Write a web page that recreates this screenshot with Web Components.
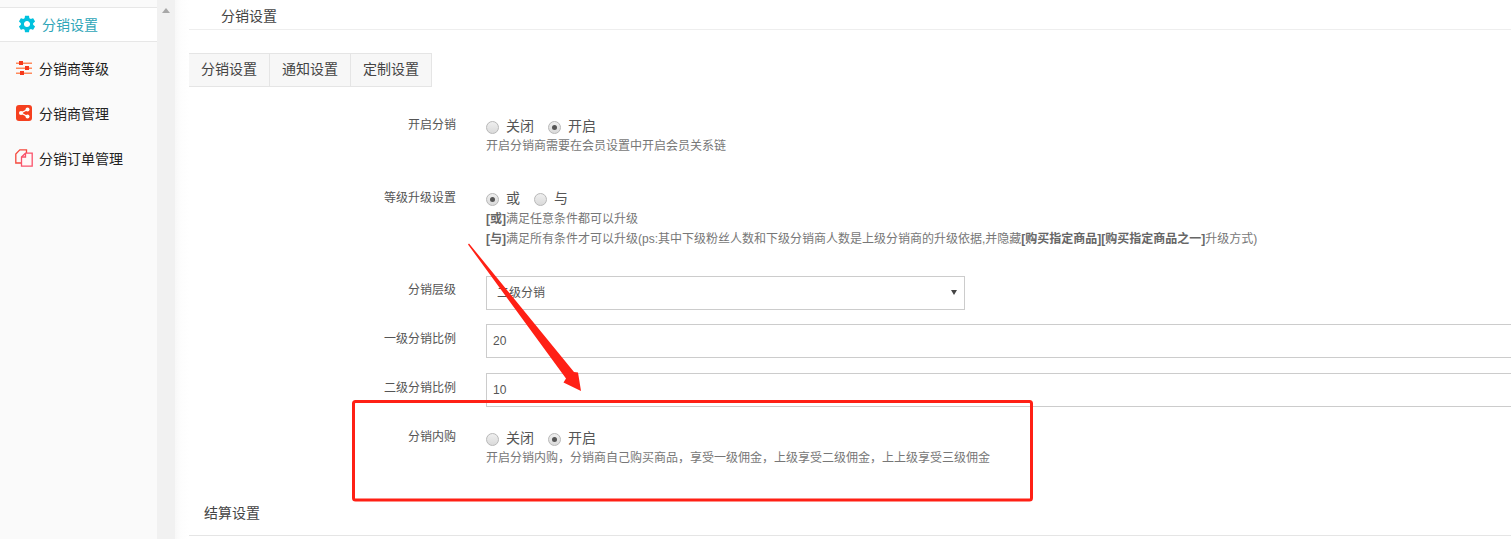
<!DOCTYPE html>
<html lang="zh-CN">
<head>
<meta charset="utf-8">
<title>分销设置</title>
<style>
    html, body { margin: 0; padding: 0; height: 100%; overflow: hidden; background: #fff; }
    body { font-family: "Liberation Sans", "Noto Sans CJK SC", sans-serif; font-size: 12px; color: #555; }
</style>
</head>
<body>
<app-shell>
    <side-nav slot="nav">
        <nav-item active label="分销设置" icon="gear"></nav-item>
        <nav-item label="分销商等级" icon="sliders"></nav-item>
        <nav-item label="分销商管理" icon="share"></nav-item>
        <nav-item label="分销订单管理" icon="pages"></nav-item>
    </side-nav>

    <page-header>分销设置</page-header>
    <tab-bar>
        <tab-item>分销设置</tab-item>
        <tab-item>通知设置</tab-item>
        <tab-item>定制设置</tab-item>
    </tab-bar>

    <form-row label="开启分销" style="--row-top:29px;--label-top:1px">
        <radio-group>
            <radio-option>关闭</radio-option>
            <radio-option checked>开启</radio-option>
        </radio-group>
        <help-text>开启分销商需要在会员设置中开启会员关系链</help-text>
    </form-row>

    <form-row label="等级升级设置" style="--row-top:32px;--label-top:2px">
        <radio-group style="height:21px">
            <radio-option checked>或</radio-option>
            <radio-option>与</radio-option>
        </radio-group>
        <help-text><b>[或]</b>满足任意条件都可以升级</help-text>
        <help-text><b>[与]</b>满足所有条件才可以升级(ps:其中下级粉丝人数和下级分销商人数是上级分销商的升级依据,并隐藏<b>[购买指定商品][购买指定商品之一]</b>升级方式)</help-text>
    </form-row>

    <form-row label="分销层级" style="--row-top:27px;--label-top:6px">
        <select-box>二级分销</select-box>
    </form-row>
    <form-row label="一级分销比例" style="--row-top:14px;--label-top:7px">
        <text-field>20</text-field>
    </form-row>
    <form-row label="二级分销比例" style="--row-top:15px;--label-top:7px">
        <text-field>10</text-field>
    </form-row>

    <form-row label="分销内购" style="--row-top:21px;--label-top:1px">
        <radio-group>
            <radio-option>关闭</radio-option>
            <radio-option checked>开启</radio-option>
        </radio-group>
        <help-text>开启分销内购，分销商自己购买商品，享受一级佣金，上级享受二级佣金，上上级享受三级佣金</help-text>
    </form-row>

    <section-title>结算设置</section-title>
</app-shell>

<script>
/**
 * Page frame: sidebar, scrollbar rail, content column and the red annotation on top
 */
class AppShell extends HTMLElement {
    constructor() {
        super();
        this.attachShadow({ mode: 'open' });
    }

    connectedCallback() {
        this.shadowRoot.innerHTML = `
            <style>
                :host {
                    display: grid;
                    grid-template-columns: 157px 18px 14px minmax(0, 1fr);
                    height: 539px;
                    overflow: hidden;
                    position: relative;
                }
                .rail {
                    background: #f1f1f1;
                    display: flex;
                    justify-content: center;
                    padding-top: 8px;
                    box-sizing: border-box;
                }
                .rail i {
                    width: 0;
                    height: 0;
                    border: 4px solid transparent;
                    border-top: 0;
                    border-bottom: 5px solid #a8a8a8;
                }
                .gutter { background: linear-gradient(90deg, #f8f8f8, #fdfdfd 40%, #fff); }
                .content { min-width: 0; }
                svg.mark { position: absolute; left: 0; top: 0; pointer-events: none; }
            </style>
            <slot name="nav"></slot>
            <div class="rail"><i></i></div>
            <div class="gutter"></div>
            <div class="content"><slot></slot></div>
            <svg class="mark" width="1511" height="539" viewBox="0 0 1511 539" aria-hidden="true">
                <rect x="353.5" y="401.5" width="678" height="98.5" rx="2" fill="none" stroke="#ff2015" stroke-width="3"/>
                <polygon fill="#ff2015" points="468,244.5 469,243.5 574,372 578,372.5 581,391 563.5,382.5 566,378.5"/>
            </svg>
        `;
    }
}

/**
 * Left column holding the navigation items
 */
class SideNav extends HTMLElement {
    constructor() {
        super();
        this.attachShadow({ mode: 'open' });
    }

    connectedCallback() {
        this.shadowRoot.innerHTML = `
            <style>
                :host {
                    display: block;
                    background: #fafafa;
                    padding-top: 7px;
                    box-sizing: border-box;
                }
            </style>
            <slot></slot>
        `;
    }
}

// Inline icons of the sidebar
const NAV_ICONS = {
    gear: `<svg width="18" height="18" viewBox="1.5 1.5 21 21"><path fill="#00c1de" d="M19.14 12.94c.04-.3.06-.61.06-.94 0-.32-.02-.64-.07-.94l2.03-1.58c.18-.14.23-.41.12-.61l-1.92-3.32c-.12-.22-.37-.29-.59-.22l-2.39.96c-.5-.38-1.03-.7-1.62-.94l-.36-2.54c-.04-.24-.24-.41-.48-.41h-3.84c-.24 0-.43.17-.47.41l-.36 2.54c-.59.24-1.13.57-1.62.94l-2.39-.96c-.22-.08-.47 0-.59.22L2.74 8.87c-.12.21-.08.47.12.61l2.03 1.58c-.05.3-.09.63-.09.94s.02.64.07.94l-2.03 1.58c-.18.14-.23.41-.12.61l1.92 3.32c.12.22.37.29.59.22l2.39-.96c.5.38 1.03.7 1.62.94l.36 2.54c.05.24.24.41.48.41h3.84c.24 0 .44-.17.47-.41l.36-2.54c.59-.24 1.13-.56 1.62-.94l2.39.96c.22.08.47 0 .59-.22l1.92-3.32c.12-.22.07-.47-.12-.61l-2.01-1.58zM12 15.6c-1.98 0-3.6-1.62-3.6-3.6s1.62-3.6 3.6-3.6 3.6 1.62 3.6 3.6-1.62 3.6-3.6 3.6z"/></svg>`,
    sliders: `<svg width="18" height="18" viewBox="0 0 18 18">
        <g fill="#ff8a5c"><rect x="1" y="3.5" width="16" height="1.5"/><rect x="1" y="8.5" width="16" height="1.5"/><rect x="1" y="13.5" width="16" height="1.5"/></g>
        <g fill="#f5391c"><rect x="4" y="2" width="4" height="4"/><rect x="10" y="7" width="4" height="4"/><rect x="5" y="12" width="4" height="4"/></g>
    </svg>`,
    share: `<svg width="18" height="18" viewBox="0 0 18 18">
        <rect x="1" y="1" width="16" height="16" rx="3" fill="#f5401f"/>
        <path d="M12.5 5.5 L6 9 L12.5 12.5" fill="none" stroke="#fff" stroke-width="1.4"/>
        <circle cx="12.5" cy="5.5" r="2" fill="#fff"/><circle cx="6" cy="9" r="2" fill="#fff"/><circle cx="12.5" cy="12.5" r="2" fill="#fff"/>
    </svg>`,
    pages: `<svg width="18" height="18" viewBox="0 0 18 18" fill="none" stroke="#f9526a" stroke-width="1.3">
        <path d="M6.5 14H.8V5L4.8.8H11.5V4" stroke="#f5483c"/>
        <path d="M6.5 8 10.5 4.2H17.2V17.2H6.5Z" fill="#fff8f8"/>
        <path d="M10.5 4.2V8H6.5" />
    </svg>`
};

/**
 * One sidebar entry, active one is white with borders
 */
class NavItem extends HTMLElement {
    constructor() {
        super();
        this.attachShadow({ mode: 'open' });
    }

    connectedCallback() {
        const icon = NAV_ICONS[this.getAttribute('icon')] || '';
        this.shadowRoot.innerHTML = `
            <style>
                :host {
                    display: flex;
                    align-items: center;
                    height: 45px;
                    padding-left: 15px;
                    gap: 6px;
                    box-sizing: border-box;
                    font-size: 14px;
                    color: #222;
                }
                :host([active]) {
                    height: 35px;
                    padding: 0 0 2px 18px;
                    margin-bottom: 3px;
                    background: #fff;
                    border-top: 1px solid #e7e7e7;
                    border-bottom: 1px solid #e7e7e7;
                    color: #2ea5b8;
                }
                svg { display: block; }
                .ico { flex: none; width: 18px; height: 18px; }
            </style>
            <span class="ico">${icon}</span>
            <span>${this.getAttribute('label') || ''}</span>
        `;
    }
}

/**
 * Title at the top of the content column
 */
class PageHeader extends HTMLElement {
    constructor() {
        super();
        this.attachShadow({ mode: 'open' });
    }

    connectedCallback() {
        this.shadowRoot.innerHTML = `
            <style>
                :host {
                    display: block;
                    height: 30px;
                    line-height: 32px;
                    padding-left: 32px;
                    box-sizing: border-box;
                    border-bottom: 1px solid #eee;
                    font-size: 14px;
                    color: #444;
                }
            </style>
            <slot></slot>
        `;
    }
}

/**
 * Row of tabs
 */
class TabBar extends HTMLElement {
    constructor() {
        super();
        this.attachShadow({ mode: 'open' });
    }

    connectedCallback() {
        this.shadowRoot.innerHTML = `
            <style>
                :host { display: flex; margin-top: 23px; }
            </style>
            <slot></slot>
        `;
    }
}

class TabItem extends HTMLElement {
    constructor() {
        super();
        this.attachShadow({ mode: 'open' });
    }

    connectedCallback() {
        this.shadowRoot.innerHTML = `
            <style>
                :host {
                    display: block;
                    height: 34px;
                    line-height: 30px;
                    padding: 0 12px;
                    box-sizing: border-box;
                    background: #f7f7f7;
                    border-top: 1px solid #e5e5e5;
                    border-bottom: 1px solid #e5e5e5;
                    border-right: 1px solid #e5e5e5;
                    font-size: 14px;
                    color: #444;
                }
            </style>
            <slot></slot>
        `;
    }
}

/**
 * Form line: label on the right of a fixed column, controls next to it
 */
class FormRow extends HTMLElement {
    constructor() {
        super();
        this.attachShadow({ mode: 'open' });
    }

    connectedCallback() {
        this.shadowRoot.innerHTML = `
            <style>
                :host {
                    display: grid;
                    grid-template-columns: 267px minmax(0, 1fr);
                    column-gap: 30px;
                    margin-top: var(--row-top, 0);
                }
                .label {
                    text-align: right;
                    font-size: 12px;
                    line-height: 16px;
                    padding-top: var(--label-top, 0);
                    color: #555;
                }
                .controls { min-width: 0; }
            </style>
            <div class="label">${this.getAttribute('label') || ''}</div>
            <div class="controls"><slot></slot></div>
        `;
    }
}

class RadioGroup extends HTMLElement {
    constructor() {
        super();
        this.attachShadow({ mode: 'open' });
    }

    connectedCallback() {
        this.shadowRoot.innerHTML = `
            <style>
                :host { display: flex; align-items: flex-start; height: 20px; gap: 14px; }
            </style>
            <slot></slot>
        `;
    }
}

/**
 * Grey radio button with text, drawn with CSS to keep the old browser look
 */
class RadioOption extends HTMLElement {
    constructor() {
        super();
        this.attachShadow({ mode: 'open' });
    }

    connectedCallback() {
        this.shadowRoot.innerHTML = `
            <style>
                :host {
                    display: inline-flex;
                    align-items: flex-start;
                    gap: 7px;
                    font-size: 14px;
                    line-height: 20px;
                    color: #555;
                }
                .dot {
                    width: 13px;
                    height: 13px;
                    margin-top: 5px;
                    border-radius: 50%;
                    box-sizing: border-box;
                    border: 1px solid #b8b8b8;
                    background: linear-gradient(#efefef, #dadada);
                    display: flex;
                    align-items: center;
                    justify-content: center;
                }
                :host([checked]) .dot::after {
                    content: '';
                    width: 5px;
                    height: 5px;
                    border-radius: 50%;
                    background: #555;
                }
            </style>
            <span class="dot"></span>
            <span><slot></slot></span>
        `;
    }
}

class HelpText extends HTMLElement {
    constructor() {
        super();
        this.attachShadow({ mode: 'open' });
    }

    connectedCallback() {
        this.shadowRoot.innerHTML = `
            <style>
                :host {
                    display: block;
                    line-height: 20px;
                    font-size: 12px;
                    color: #777;
                    white-space: nowrap;
                }
                ::slotted(b) { color: #666; font-weight: 700; }
            </style>
            <slot></slot>
        `;
    }
}

class SelectBox extends HTMLElement {
    constructor() {
        super();
        this.attachShadow({ mode: 'open' });
    }

    connectedCallback() {
        this.shadowRoot.innerHTML = `
            <style>
                :host {
                    display: flex;
                    align-items: center;
                    justify-content: space-between;
                    width: 479px;
                    height: 34px;
                    padding: 0 7px 0 10px;
                    box-sizing: border-box;
                    border: 1px solid #ccc;
                    font-size: 12px;
                    color: #555;
                    background: #fff;
                }
                span { margin-bottom: 3px; }
                i {
                    width: 0;
                    height: 0;
                    margin-bottom: 1px;
                    border: 3px solid transparent;
                    border-bottom: 0;
                    border-top: 5px solid #444;
                }
            </style>
            <span><slot></slot></span>
            <i></i>
        `;
    }
}

class TextField extends HTMLElement {
    constructor() {
        super();
        this.attachShadow({ mode: 'open' });
    }

    connectedCallback() {
        this.shadowRoot.innerHTML = `
            <style>
                :host {
                    display: block;
                    width: 1100px;
                    height: 34px;
                    line-height: 32px;
                    padding-left: 6px;
                    box-sizing: border-box;
                    border: 1px solid #ccc;
                    font-size: 12px;
                    color: #555;
                    background: #fff;
                }
            </style>
            <slot></slot>
        `;
    }
}

class SectionTitle extends HTMLElement {
    constructor() {
        super();
        this.attachShadow({ mode: 'open' });
    }

    connectedCallback() {
        this.shadowRoot.innerHTML = `
            <style>
                :host {
                    display: block;
                    margin-top: 33px;
                    height: 35px;
                    padding-left: 15px;
                    line-height: 24px;
                    box-sizing: border-box;
                    border-bottom: 1px solid #e5e5e5;
                    font-size: 14px;
                    color: #444;
                }
            </style>
            <slot></slot>
        `;
    }
}

// Registrem els components
customElements.define('app-shell', AppShell);
customElements.define('side-nav', SideNav);
customElements.define('nav-item', NavItem);
customElements.define('page-header', PageHeader);
customElements.define('tab-bar', TabBar);
customElements.define('tab-item', TabItem);
customElements.define('form-row', FormRow);
customElements.define('radio-group', RadioGroup);
customElements.define('radio-option', RadioOption);
customElements.define('help-text', HelpText);
customElements.define('select-box', SelectBox);
customElements.define('text-field', TextField);
customElements.define('section-title', SectionTitle);
</script>
</body>
</html>
